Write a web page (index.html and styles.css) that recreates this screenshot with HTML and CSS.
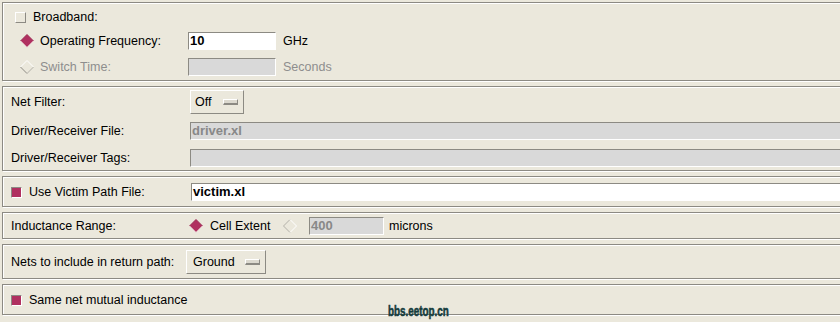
FILE: index.html
```html
<!DOCTYPE html>
<html>
<head>
<meta charset="utf-8">
<link rel="stylesheet" href="styles.css">
</head>
<body>
<div class="form">
  <section class="panel p1">
    <div class="row r1">
      <span class="check"></span>
      <span class="text">Broadband:</span>
    </div>
    <div class="row r2">
      <span class="radio-slot">
        <svg class="diamond" viewBox="0 0 14 14" width="14" height="14"><polygon points="7,0.5 13.5,7 7,13.5 0.5,7" fill="#b03060"/><polyline points="0.5,7 7,0.5 13.5,7" fill="none" stroke="#9a2a52" stroke-width="1"/><polyline points="0.5,7 7,13.5 13.5,7" fill="none" stroke="#f4f1ea" stroke-width="1"/></svg>
      </span>
      <span class="text lab1">Operating Frequency:</span>
      <span class="field white w88">10</span>
      <span class="text unit">GHz</span>
    </div>
    <div class="row r3">
      <span class="radio-slot">
        <svg class="diamond" viewBox="0 0 14 14" width="14" height="14"><polyline points="0.5,7 7,0.5 13.5,7" fill="none" stroke="#ffffff" stroke-width="1"/><polyline points="0.5,7 7,13.5" fill="none" stroke="#8c8a83" stroke-width="1"/><polyline points="7,13.5 13.5,7" fill="none" stroke="#b2b0a8" stroke-width="1"/></svg>
      </span>
      <span class="text lab1 dis">Switch Time:</span>
      <span class="field gray w88"></span>
      <span class="text unit dis">Seconds</span>
    </div>
  </section>

  <section class="panel p2">
    <div class="row mrow">
      <span class="text lab2">Net Filter:</span>
      <span class="menu m-off"><span class="mtext">Off</span><span class="mind"></span></span>
    </div>
    <div class="row frow f1">
      <span class="text lab2">Driver/Receiver File:</span>
      <span class="field gray grow dtext">driver.xl</span>
    </div>
    <div class="row frow f2">
      <span class="text lab2">Driver/Receiver Tags:</span>
      <span class="field gray grow"></span>
    </div>
  </section>

  <section class="panel p3">
    <div class="row">
      <span class="check on"></span>
      <span class="text lab3">Use Victim Path File:</span>
      <span class="field white grow">victim.xl</span>
    </div>
  </section>

  <section class="panel p4">
    <div class="row">
      <span class="text lab4">Inductance Range:</span>
      <span class="radio-slot2">
        <svg class="diamond" viewBox="0 0 14 14" width="14" height="14"><polygon points="7,0.5 13.5,7 7,13.5 0.5,7" fill="#b03060"/><polyline points="0.5,7 7,0.5 13.5,7" fill="none" stroke="#9a2a52" stroke-width="1"/><polyline points="0.5,7 7,13.5 13.5,7" fill="none" stroke="#f4f1ea" stroke-width="1"/></svg>
      </span>
      <span class="text cell">Cell Extent</span>
      <span class="radio-slot3">
        <svg class="diamond" viewBox="0 0 14 14" width="14" height="14"><polyline points="0.5,7 7,0.5" fill="none" stroke="#b2b0a8" stroke-width="1"/><polyline points="7,0.5 13.5,7 7,13.5" fill="none" stroke="#ffffff" stroke-width="1"/><polyline points="0.5,7 7,13.5" fill="none" stroke="#b2b0a8" stroke-width="1"/></svg>
      </span>
      <span class="field gray w75 dtext">400</span>
      <span class="text unit2">microns</span>
    </div>
  </section>

  <section class="panel p5">
    <div class="row mrow">
      <span class="text lab5">Nets to include in return path:</span>
      <span class="menu m-ground"><span class="mtext">Ground</span><span class="mind"></span></span>
    </div>
  </section>

  <section class="panel p6">
    <div class="row">
      <span class="check on"></span>
      <span class="text">Same net mutual inductance</span>
    </div>
  </section>

  <div class="watermark">bbs.eetop.cn</div>
</div>
</body>
</html>
```

FILE: styles.css
```css
html, body {
  margin: 0;
  padding: 0;
  background: #ebe8dc;
  overflow: hidden;
}

body {
  font-family: "Liberation Sans", Arial, sans-serif;
  font-size: 12.5px;
  color: #000;
  width: 840px;
  height: 322px;
}

.form {
  position: relative;
  display: flex;
  flex-direction: column;
  gap: 5px;
  padding: 2px 0 0 2px;
  width: 900px;
}

.panel {
  border: 1px solid #8c8a83;
  box-shadow: inset 1px 1px 0 #fff, 1px 1px 0 #fff;
  display: flex;
  flex-direction: column;
}

.row {
  display: flex;
  align-items: center;
  height: 18px;
}

.text {
  white-space: nowrap;
  line-height: 15px;
}

.dis {
  color: #8e8e8e;
}

/* checkbox */
.check {
  width: 11px;
  height: 11px;
  box-sizing: border-box;
  border-style: solid;
  border-width: 1px;
  border-color: #fff #8c8a83 #8c8a83 #fff;
  margin-right: 7px;
  flex: none;
}

.check.on {
  background: #b03060;
  border-color: #8c8a83 #fff #fff #8c8a83;
}

/* fields */
.field {
  box-sizing: border-box;
  height: 18px;
  border-style: solid;
  border-width: 1px;
  border-color: #8c8a83 #fff #fff #8c8a83;
  padding-left: 1px;
  font-weight: bold;
  font-size: 13px;
  line-height: 16px;
  white-space: nowrap;
  flex: none;
}

.field.white {
  background: #fff;
  color: #000;
}

.field.gray {
  background: #d9d9d9;
}

.dtext {
  color: #888888;
}

.grow {
  flex: 1;
}

.w88 {
  width: 88px;
}

.w75 {
  width: 75px;
}

/* panel 1 */
.p1 {
  padding: 5px 0 4px 0;
}

.p1 .r1 {
  padding-left: 12px;
}

.p1 .r2 {
  margin-top: 6px;
  padding-left: 17px;
}

.p1 .r3 {
  margin-top: 8px;
  padding-left: 17px;
}

.radio-slot {
  width: 20px;
  display: flex;
  align-items: center;
  flex: none;
}

.diamond {
  display: block;
}

.lab1 {
  width: 148px;
}

.unit {
  margin-left: 7px;
}

/* panel 2 */
.p2 {
  padding: 3px 0 3px 8px;
}

.p2 .mrow {
  height: 24px;
}

.p2 .f1 {
  margin-top: 8px;
}

.p2 .f2 {
  margin-top: 9px;
}

.lab2 {
  width: 179px;
}

/* menubutton */
.menu {
  box-sizing: border-box;
  height: 24px;
  display: flex;
  align-items: center;
  border-style: solid;
  border-width: 1px;
  border-color: #fff #8c8a83 #8c8a83 #fff;
  padding: 0 5px 0 4px;
  flex: none;
}

.m-off {
  width: 54px;
}

.m-ground {
  width: 80px;
  padding-left: 6px;
}

.mtext {
  line-height: 15px;
}

.mind {
  margin-left: auto;
  width: 15px;
  height: 6px;
  box-sizing: border-box;
  border-style: solid;
  border-width: 1px 1px 2px 1px;
  border-color: #fff #8c8a83 #8c8a83 #fff;
  background: #dcd9cf;
}

/* panel 3 */
.p3 {
  padding: 6px 0 5px 8px;
}

.lab3 {
  width: 162px;
}

/* panel 4 */
.p4 {
  padding: 4px 0 3px 8px;
}

.lab4 {
  width: 178px;
}

.radio-slot2 {
  width: 21px;
  display: flex;
  align-items: center;
  flex: none;
}

.cell {
  width: 73px;
}

.radio-slot3 {
  width: 26px;
  display: flex;
  align-items: center;
  flex: none;
}

.unit2 {
  margin-left: 5px;
}

/* panel 5 */
.p5 {
  padding: 5px 0 4px 8px;
}

.p5 .mrow {
  height: 24px;
}

.lab5 {
  width: 175px;
}

/* panel 6 */
.p6 {
  padding: 6px 0 5px 8px;
}

/* watermark overlay */
.watermark {
  position: absolute;
  left: 388px;
  top: 303px;
  font-family: "Liberation Sans", Arial, sans-serif;
  font-weight: bold;
  font-size: 14.5px;
  line-height: 16px;
  color: #163c3c;
  -webkit-text-stroke: 0.6px #163c3c;
  transform: scaleX(0.68);
  transform-origin: left center;
  white-space: nowrap;
}
```
